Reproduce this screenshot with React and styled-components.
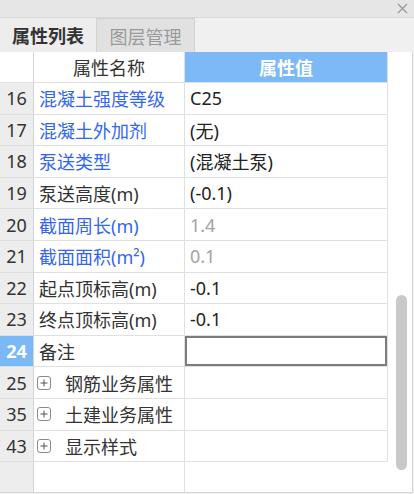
import React from "react";
import styled, { createGlobalStyle } from "styled-components";

const Global = createGlobalStyle`
  html, body { margin: 0; padding: 0; background: #f0f0f0; }
  body { font-family: "Noto Sans", "Noto Sans CJK SC", sans-serif; }
`;

const Root = styled.div`
  width: 414px;
  height: 494px;
  display: flex;
  flex-direction: column;
  background: #f0f0f0;
  overflow: hidden;
`;

const TitleBar = styled.div`
  height: 17px;
  background: #e6e6e6;
  border-bottom: 1px solid #d8d8d8;
  display: flex;
  justify-content: flex-end;
  align-items: center;
  padding-right: 6px;
`;

const TabBar = styled.div`
  height: 34px;
  display: flex;
  background: #f0f0f0;
`;

const Tab = styled.div`
  width: ${(p) => (p.$active ? "97px" : "98px")};
  box-sizing: border-box;
  display: flex;
  align-items: center;
  justify-content: center;
  font-size: 18px;
  font-weight: ${(p) => (p.$active ? 700 : 400)};
  color: ${(p) => (p.$active ? "#333" : "#9a9a9a")};
  background: ${(p) => (p.$active ? "#ededed" : "#e1e1e1")};
  border-right: 1px solid #d2d2d2;
  border-top: ${(p) => (p.$active ? "none" : "1px solid #d2d2d2")};
`;

const Panel = styled.div`
  flex: 1;
  display: flex;
  background: #fff;
  border-right: 1px solid #d6d6d6;
  border-bottom: 1px solid #d6d6d6;
  margin-right: 1px;
  margin-bottom: 1px;
`;

const Table = styled.div`
  width: 388px;
  display: flex;
  flex-direction: column;
`;

const Row = styled.div`
  display: grid;
  grid-template-columns: 34px 151px 203px;
  height: ${(p) => (p.$header ? "31px" : "31.6px")};
`;

const NumCell = styled.div`
  box-sizing: border-box;
  display: flex;
  align-items: center;
  justify-content: center;
  font-size: 18px;
  background: ${(p) => (p.$selected ? "#7ab8f6" : p.$header ? "#fff" : "#ededed")};
  color: ${(p) => (p.$selected ? "#fff" : "#333")};
  font-weight: ${(p) => (p.$selected ? 700 : 400)};
  border-right: 1px solid #d4d4d4;
  border-bottom: ${(p) => (p.$filler ? "none" : "1px solid #dedede")};
`;

const NameCell = styled.div`
  box-sizing: border-box;
  display: flex;
  align-items: center;
  justify-content: ${(p) => (p.$header ? "center" : "flex-start")};
  padding-left: ${(p) => (p.$header ? "0" : "5px")};
  font-size: 18px;
  color: ${(p) => (p.$blue ? "#3366ee" : "#333")};
  white-space: nowrap;
  border-right: 1px solid #e0e0e0;
  border-bottom: ${(p) => (p.$filler ? "none" : "1px solid #e0e0e0")};
`;

const ValueCell = styled.div`
  box-sizing: border-box;
  display: flex;
  align-items: center;
  justify-content: ${(p) => (p.$header ? "center" : "flex-start")};
  padding-left: ${(p) => (p.$header ? "0" : "5px")};
  font-size: 18px;
  background: ${(p) => (p.$header ? "#7cb9f6" : "#fff")};
  color: ${(p) => (p.$header ? "#fff" : p.$muted ? "#a3a3a3" : "#222")};
  font-weight: ${(p) => (p.$header ? 700 : 400)};
  border-right: ${(p) => (p.$filler ? "none" : "1px solid #e0e0e0")};
  border-bottom: ${(p) => (p.$filler ? "none" : "1px solid #e0e0e0")};
  box-shadow: ${(p) => (p.$selected ? "inset 0 0 0 2px #7c7c7c" : "none")};
`;

const Filler = styled(Row)`
  flex: 1;
  height: auto;
`;

const Expander = styled.span`
  flex: 0 0 14px;
  width: 14px;
  height: 14px;
  box-sizing: border-box;
  border: 1px solid #8a8a8a;
  border-radius: 3px;
  display: inline-flex;
  align-items: center;
  justify-content: center;
  margin: 0 14px 0 -2px;
`;

const ScrollTrack = styled.div`
  flex: 1;
  display: flex;
  justify-content: center;
  padding-top: 243px;
  padding-left: 3px;
`;

const Thumb = styled.div`
  width: 11px;
  height: 175px;
  border-radius: 6px;
  background: #c9c9c9;
`;

const rows = [
  { n: 16, name: "混凝土强度等级", value: "C25", blue: true },
  { n: 17, name: "混凝土外加剂", value: "(无)", blue: true },
  { n: 18, name: "泵送类型", value: "(混凝土泵)", blue: true },
  { n: 19, name: "泵送高度(m)", value: "(-0.1)" },
  { n: 20, name: "截面周长(m)", value: "1.4", blue: true, muted: true },
  { n: 21, name: "截面面积(m²)", value: "0.1", blue: true, muted: true },
  { n: 22, name: "起点顶标高(m)", value: "-0.1" },
  { n: 23, name: "终点顶标高(m)", value: "-0.1" },
  { n: 24, name: "备注", value: "", selected: true },
  { n: 25, name: "钢筋业务属性", group: true },
  { n: 35, name: "土建业务属性", group: true },
  { n: 43, name: "显示样式", group: true },
];

const PlusIcon = () => (
  <svg width="8" height="8" viewBox="0 0 8 8">
    <path d="M4 0.5v7M0.5 4h7" stroke="#555" strokeWidth="1" />
  </svg>
);

export default function App() {
  return (
    <Root>
      <Global />
      <TitleBar>
        <svg width="11" height="11" viewBox="0 0 11 11">
          <path d="M1 1l9 9M10 1l-9 9" stroke="#9a9a9a" strokeWidth="1.3" />
        </svg>
      </TitleBar>
      <TabBar>
        <Tab $active>属性列表</Tab>
        <Tab>图层管理</Tab>
      </TabBar>
      <Panel>
        <Table>
          <Row $header>
            <NumCell $header />
            <NameCell $header>属性名称</NameCell>
            <ValueCell $header>属性值</ValueCell>
          </Row>
          {rows.map((r) => (
            <Row key={r.n}>
              <NumCell $selected={r.selected}>{r.n}</NumCell>
              <NameCell $blue={r.blue}>
                {r.group && (
                  <Expander>
                    <PlusIcon />
                  </Expander>
                )}
                {r.name}
              </NameCell>
              <ValueCell $muted={r.muted} $selected={r.selected}>
                {r.value}
              </ValueCell>
            </Row>
          ))}
          <Filler>
            <NumCell $filler />
            <NameCell $filler />
            <ValueCell $filler />
          </Filler>
        </Table>
        <ScrollTrack>
          <Thumb />
        </ScrollTrack>
      </Panel>
    </Root>
  );
}
